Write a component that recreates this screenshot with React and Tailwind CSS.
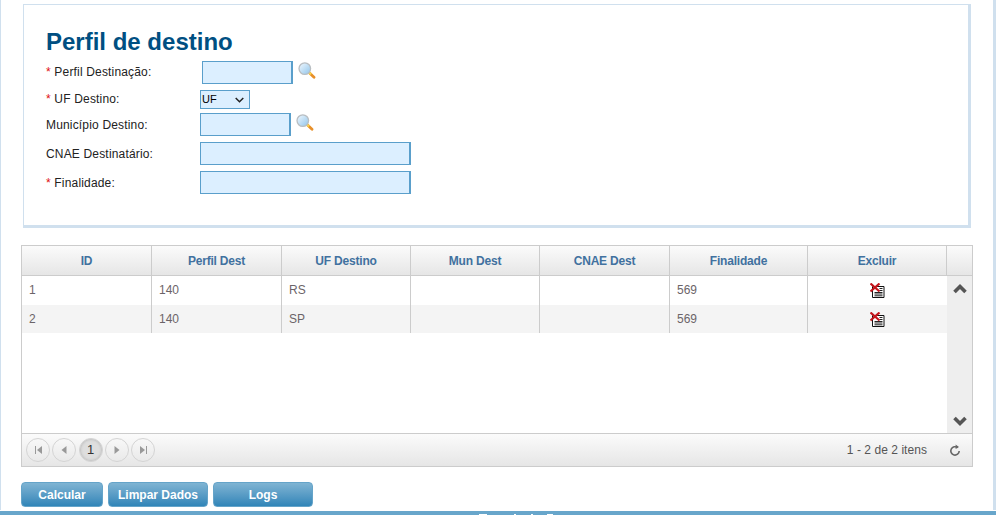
import React from 'react';

const columns = [
  { label: 'ID', width: 'w-[130px]' },
  { label: 'Perfil Dest', width: 'w-[130px]' },
  { label: 'UF Destino', width: 'w-[129px]' },
  { label: 'Mun Dest', width: 'w-[129px]' },
  { label: 'CNAE Dest', width: 'w-[130px]' },
  { label: 'Finalidade', width: 'w-[138px]' },
  { label: 'Excluir', width: 'w-[139px]' },
];

const rows = [
  ['1', '140', 'RS', '', '', '569'],
  ['2', '140', 'SP', '', '', '569'],
];

const Lens = ({ id, className }) => (
  <svg className={className} width="18" height="17" viewBox="0 0 18 17">
    <defs>
      <linearGradient id={id} x1="0" y1="0" x2="1" y2="1">
        <stop offset="0" stopColor="#f2f9ff" />
        <stop offset="1" stopColor="#8fc4ea" />
      </linearGradient>
    </defs>
    <path d="M10.5 10 L16 15.2" stroke="#e8902a" strokeWidth="2.8" strokeLinecap="round" />
    <path d="M11 10.5 L13 12.4" stroke="#f6d44a" strokeWidth="2.4" />
    <circle cx="6.8" cy="6.6" r="5.8" fill={`url(#${id})`} stroke="#b9bec2" strokeWidth="1.3" />
  </svg>
);

const DeleteIcon = () => (
  <svg width="15" height="15" viewBox="0 0 15 15">
    <path d="M2.5 3.5H14V14.5H2.5Z" fill="#fff" stroke="#111" />
    <path d="M9.5 5.5H12.5M9.5 7.5H12.5M4.5 9.5H12.5M4.5 11H12.5M4.5 12.8H12.5" stroke="#222" />
    <path d="M0.5 0.5L9.5 8.5M9.5 0.5L0.5 8.5" stroke="#c4161c" strokeWidth="2.2" />
  </svg>
);

const PageButton = ({ children, active }) => (
  <div className={`flex h-6 w-6 items-center justify-center rounded-full border border-[#d4d4d4] ${active ? 'bg-[#dedede] shadow-[inset_0_0_3px_#aaa]' : ''}`}>
    {children}
  </div>
);

const Field = ({ label, required, children, className, labelClass }) => (
  <div className={`flex items-center ${className}`}>
    <label className={`w-[154px] text-xs tracking-[0.17px] text-[#222] ${labelClass || ''}`}>
      {required && <span className="text-[#e01010]">* </span>}
      {label}
    </label>
    {children}
  </div>
);

const inputClass = 'h-[23px] border border-r-2 border-[#5a9fcb] bg-[#dcefff]';
const buttonClass = 'h-[25px] rounded border border-[#65a4c9] bg-gradient-to-b from-[#7fb4d3] to-[#2f85b8] text-xs font-bold text-white';

export default function App() {
  return (
    <div className="h-[515px] w-[996px] overflow-hidden bg-white font-['Liberation_Sans',Arial,sans-serif]">
      <div className="h-[510px] border-l border-r-[3px] border-[#d0e0ee] pr-5 pl-5 pt-1">
        <div className="ml-[2px] mr-[2px] h-[224px] border-t border-l border-r-[3px] border-b-[3px] border-[#d0e0ee] pl-[22px] pt-[22px]">
          <h1 className="text-2xl leading-[30px] font-bold text-[#004f82]">Perfil de destino</h1>
          <Field label="Perfil Destinação:" required className="mt-[4px] h-[23px]" labelClass="pb-[1px]">
            <input className={`${inputClass} ml-[2px] w-[91px]`} readOnly />
            <Lens id="lens-perfil" className="-mt-[5px] ml-[5px]" />
          </Field>
          <Field label="UF Destino:" required className="mt-[6px] h-[19px]" labelClass="pb-[1px]">
            <div className="flex h-[19px] w-[50px] items-center justify-between border border-[#5a9fcb] bg-[#dcefff] pr-[5px] pl-[1px] text-[11px] text-black">
              UF
              <svg width="9" height="6" viewBox="0 0 9 6">
                <path d="M0.7 1L4.5 4.8L8.3 1" fill="none" stroke="#222" strokeWidth="1.5" />
              </svg>
            </div>
          </Field>
          <Field label="Município Destino:" className="mt-[4px] h-[23px]">
            <input className={`${inputClass} w-[91px]`} readOnly />
            <Lens id="lens-municipio" className="-mt-[5px] ml-[5px]" />
          </Field>
          <Field label="CNAE Destinatário:" className="mt-[6px] h-[23px]">
            <input className={`${inputClass} w-[211px]`} readOnly />
          </Field>
          <Field label="Finalidade:" required className="mt-[6px] h-[23px]">
            <input className={`${inputClass} w-[211px]`} readOnly />
          </Field>
        </div>

        <div className="mt-[17px] h-[222px] w-[952px] border border-[#cccccc]">
          <div className="flex h-[30px] border-b border-[#cccccc] bg-gradient-to-b from-[#fbfbfb] to-[#e6e6e6]">
            {columns.map((col) => (
              <div key={col.label} className={`${col.width} flex items-center justify-center border-r border-[#cccccc] text-xs font-bold tracking-[-0.2px] text-[#41719f]`}>
                {col.label}
              </div>
            ))}
            <div className="flex-1" />
          </div>

          <div className="flex h-[157px]">
            <div className="w-[925px]">
              {rows.map((row, i) => (
                <div key={row[0]} className={`flex ${i === 0 ? 'h-[29px]' : 'h-[28px] bg-[#f4f4f4]'}`}>
                  {row.map((cell, j) => (
                    <div key={j} className={`${columns[j].width} flex items-center border-r border-[#cccccc] pl-[7px] text-xs text-[#6b6468] ${i === 0 ? 'pb-[2px]' : ''}`}>
                      {cell}
                    </div>
                  ))}
                  <div className="flex w-[139px] items-center justify-center pr-[1px]">
                    <DeleteIcon />
                  </div>
                </div>
              ))}
            </div>
            <div className="flex flex-1 flex-col items-center justify-between bg-[#eeeeee] pt-[7px] pb-[6px]">
              <svg width="14" height="11" viewBox="0 0 14 11">
                <path d="M1.5 9L7 3.5L12.5 9" fill="none" stroke="#555" strokeWidth="3.6" />
              </svg>
              <svg width="14" height="11" viewBox="0 0 14 11">
                <path d="M1.5 2L7 7.5L12.5 2" fill="none" stroke="#555" strokeWidth="3.6" />
              </svg>
            </div>
          </div>

          <div className="flex h-[33px] items-center justify-between border-t border-[#cccccc] bg-gradient-to-b from-[#fbfbfb] to-[#e6e6e6] pr-[11px] pl-[4px]">
            <div className="flex gap-[2.3px]">
              <PageButton>
                <svg width="9" height="8" viewBox="0 0 9 8"><path d="M1 0V8H2V0ZM8 0V8L3 4Z" fill="#999" /></svg>
              </PageButton>
              <PageButton>
                <svg width="6" height="8" viewBox="0 0 6 8"><path d="M5.5 0V8L0.5 4Z" fill="#999" /></svg>
              </PageButton>
              <PageButton active>
                <span className="text-[13px] text-[#333]">1</span>
              </PageButton>
              <PageButton>
                <svg width="6" height="8" viewBox="0 0 6 8"><path d="M0.5 0V8L5.5 4Z" fill="#999" /></svg>
              </PageButton>
              <PageButton>
                <svg width="9" height="8" viewBox="0 0 9 8"><path d="M1 0V8L6 4ZM7 0V8H8V0Z" fill="#999" /></svg>
              </PageButton>
            </div>
            <div className="flex items-center gap-[22px]">
              <span className="text-xs tracking-[0.05px] text-[#555]">1 - 2 de 2 itens</span>
              <svg width="12" height="13" viewBox="0 0 12 13">
                <path d="M8.6 3.6A4.2 4.2 0 1 0 10.2 7" fill="none" stroke="#666" strokeWidth="1.6" />
                <path d="M6.6 0.5V5L10 3Z" fill="#666" />
              </svg>
            </div>
          </div>
        </div>

        <div className="mt-[15px] flex gap-[5px]">
          <button className={`${buttonClass} w-[82px]`}>Calcular</button>
          <button className={`${buttonClass} w-[100px]`}>Limpar Dados</button>
          <button className={`${buttonClass} w-[100px]`}>Logs</button>
        </div>
      </div>
      <div className="relative mt-px h-1 bg-[#68a6cb]">
        <span className="absolute top-[3px] left-[479px] h-px w-[8px] bg-white" />
        <span className="absolute top-[3px] left-[514px] h-px w-[2px] bg-white" />
        <span className="absolute top-[3px] left-[531px] h-px w-[2px] bg-white" />
        <span className="absolute top-[3px] left-[547px] h-px w-[6px] bg-white" />
      </div>
    </div>
  );
}
